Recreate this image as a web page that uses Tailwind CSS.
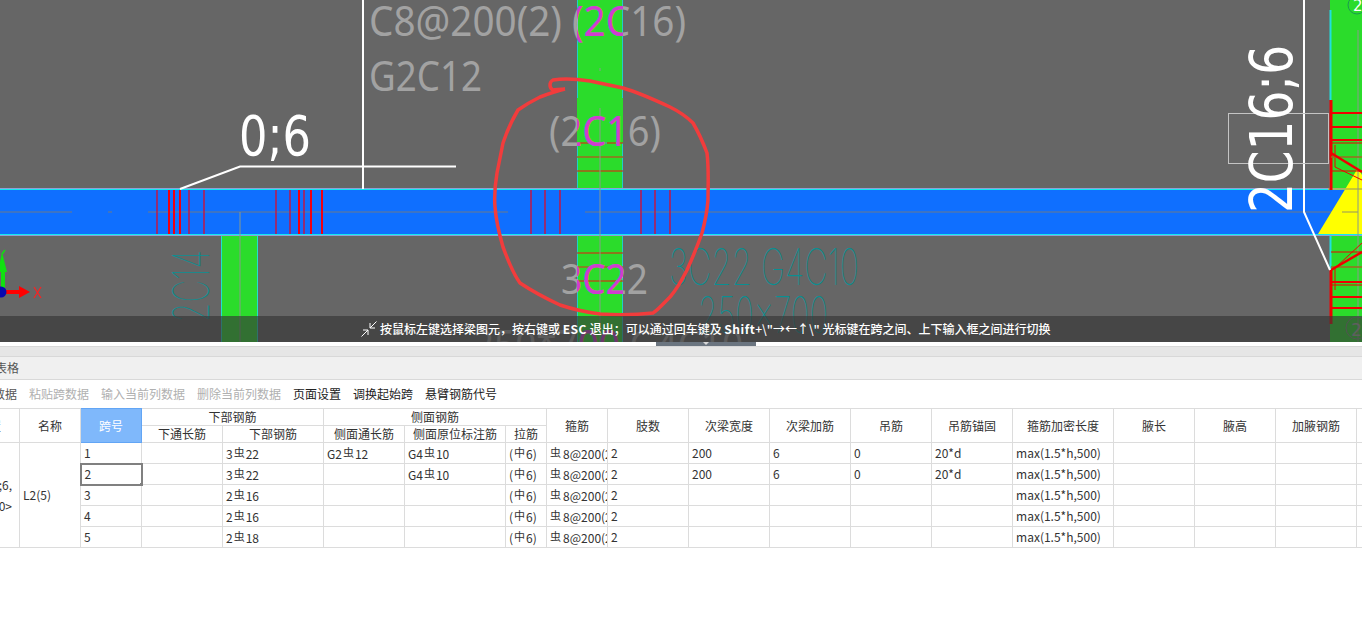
<!DOCTYPE html>
<html lang="en">
<head>
    <meta charset="UTF-8">
    <title>梁平法表格</title>
    <script src="https://cdn.jsdelivr.net/npm/@tailwindcss/browser@4"></script>
</head>
<body class="w-[1362px] h-[641px] overflow-hidden bg-white font-['Noto_Sans_CJK_SC','Noto_Sans',sans-serif] text-[12px] text-[#333]">

    <!-- CAD canvas -->
    <div class="relative h-[342px] overflow-hidden bg-[#666666]">
        <svg class="absolute inset-0" width="1362" height="342" viewBox="0 0 1362 342">
            <defs>
                <clipPath id="midCol"><rect x="577" y="0" width="46" height="342"/></clipPath>
            </defs>

            <!-- columns -->
            <rect x="577" y="0" width="46" height="342" fill="#2bdc2b"/>
            <path d="M577.5 0V98M622.5 0V98M577.5 143V189M622.5 143V189M577.5 235V342M622.5 235V342" stroke="#1fd0c8" stroke-width="1"/>
            <rect x="221" y="235" width="37" height="107" fill="#2bdc2b"/>
            <path d="M221.5 235V342M257.5 235V342" stroke="#20e0d0"/>
            <rect x="1330" y="0" width="32" height="342" fill="#2bdc2b"/>
            <path d="M1330.5 10V100M1330.5 160V189M1330.5 235V270" stroke="#20e0e0" stroke-width="2"/>

            <!-- beam -->
            <rect x="0" y="189" width="1362" height="46" fill="#0f6fff"/>
            <path d="M0 189.5H1362M0 234.5H1362" stroke="#12e8f0" stroke-width="1"/>
            <path d="M0 188.5H1362M0 235.5H1362" stroke="#8f9fd8" stroke-width="1"/>
            <path d="M0 212H72M108 212H112M148 212H508M585 212H1358" stroke="#4f77b0" stroke-width="1.5"/>

            <!-- yellow support -->
            <polygon points="1318,234 1358,168 1362,175 1362,234" fill="#ffff00"/>
            <path d="M1342 212H1358M1328 189H1362" stroke="#b8b840" stroke-width="1.5"/>

            <!-- stirrups -->
            <path d="M157 190V234M189 190V234M204 190V234M276 190V234M290 190V234M304 190V234M531 190V234M545 190V234M560 190V234M641 190V234M655 190V234M670 190V234" stroke="#c01848" stroke-width="1.5"/>
            <path d="M169 190V234M180 190V234M174 190V234M299 190V234M311 190V234M322 190V234" stroke="#f00010" stroke-width="2"/>

            <!-- column rebar ticks -->
            <path d="M577 143H623M577 171H623M577 253H623M577 281H623" stroke="#f01010" stroke-width="1"/>
            <path d="M577 157H623M577 267H623" stroke="#a06a20" stroke-width="1.5"/>
            <path d="M592 143H607" stroke="#20d8e8" stroke-width="1"/>

            <!-- center lines -->
            <path d="M600 108V342M600 68V71" stroke="#8a9a8a" stroke-width="1"/>
            <path d="M240 212V342" stroke="#8a9a8a" stroke-width="1"/>
            <path d="M1358 30V342" stroke="#8a9a8a" stroke-width="1"/>

            <!-- right side rebar -->
            <path d="M1331 100V190M1331 270V324" stroke="#f00000" stroke-width="3"/>
            <path d="M1331 113H1362M1331 127H1362M1331 140H1362M1331 282H1362M1331 297H1362M1331 308H1362" stroke="#f00000" stroke-width="2"/>
            <path d="M1331 143H1362M1331 171H1362M1331 252H1362M1331 285H1362M1335 145V167L1362 180M1335 290V268L1362 243" stroke="#f00000" stroke-width="1" fill="none"/>
            <path d="M1331 157H1362M1331 267H1362" stroke="#a06a20" stroke-width="1.5"/>
            <path d="M1331 153L1362 172M1331 270L1362 252" stroke="#f00000" stroke-width="2.5"/>

            <!-- grid bubbles -->
            <circle cx="1357" cy="5" r="9" fill="none" stroke="#1a9a50"/>
            <text x="1353" y="11" font-size="15" fill="#fff" class="font-['DejaVu_Sans',sans-serif]">2</text>
            <circle cx="1357" cy="328" r="11" fill="none" stroke="#888"/>
            <text x="1351" y="336" font-size="17" fill="#aaa" class="font-['DejaVu_Sans',sans-serif]">2</text>

            <!-- gray annotations -->
            <g fill="#a2a2a2" class="font-['Noto_Sans',sans-serif]" font-size="41">
                <text x="369" y="36" textLength="317" lengthAdjust="spacingAndGlyphs">C8@200(2) (2C16)</text>
                <text x="369" y="91" textLength="113" lengthAdjust="spacingAndGlyphs">G2C12</text>
                <text x="549" y="146" textLength="112" lengthAdjust="spacingAndGlyphs">(2C16)</text>
                <text x="561" y="294" textLength="87" lengthAdjust="spacingAndGlyphs">3C22</text>
                <text x="473" y="360" textLength="270" lengthAdjust="spacingAndGlyphs">250*700 G4C10</text>
            </g>
            <g fill="#d03cd0" clip-path="url(#midCol)" class="font-['Noto_Sans',sans-serif]" font-size="41">
                <text x="369" y="36" textLength="317" lengthAdjust="spacingAndGlyphs">C8@200(2) (2C16)</text>
                <text x="549" y="146" textLength="112" lengthAdjust="spacingAndGlyphs">(2C16)</text>
                <text x="561" y="294" textLength="87" lengthAdjust="spacingAndGlyphs">3C22</text>
                <text x="473" y="360" textLength="270" lengthAdjust="spacingAndGlyphs">250*700 G4C10</text>
            </g>

            <!-- teal annotations -->
            <g fill="#0a8f92" font-weight="100" class="font-['Inter',sans-serif]" font-size="50">
                <text x="669" y="285" textLength="190" lengthAdjust="spacingAndGlyphs">3C22 G4C10</text>
                <text x="698" y="333" textLength="130" lengthAdjust="spacingAndGlyphs">250x700</text>
                <text transform="translate(209 322) rotate(-90)" textLength="72" lengthAdjust="spacingAndGlyphs">2C14</text>
            </g>

            <!-- white leaders and labels -->
            <path d="M363 0V189M180 189L240 166.5H456" stroke="#fff" stroke-width="2" fill="none"/>
            <path d="M1304 0V212L1330 270" stroke="#fff" stroke-width="2" fill="none"/>
            <rect x="1228.5" y="113.5" width="100" height="50" fill="none" stroke="#c4c4c4" stroke-width="1"/>
            <g fill="#fff" class="font-['DejaVu_Sans',sans-serif]">
                <text x="239" y="155" font-size="56" textLength="72" lengthAdjust="spacingAndGlyphs">0;6</text>
                <text transform="translate(1292 213) rotate(-90)" font-size="58" textLength="168" lengthAdjust="spacingAndGlyphs">2C16;6</text>
            </g>

            <!-- axis -->
            <path d="M3 292V268" stroke="#10e010" stroke-width="4"/>
            <path d="M-2 272L2 252L7 272Z" fill="#10e010"/>
            <path d="M2 254L5 250" stroke="#10e010" stroke-width="1.5"/>
            <path d="M6 292H20" stroke="#ff0000" stroke-width="4"/>
            <path d="M19 286L30 292L19 298Z" fill="#ff0000"/>
            <circle cx="1" cy="292" r="5.5" fill="#0808b0"/>
            <path d="M34 287L41 298M41 287L34 298" stroke="#ff2020" stroke-width="1.2"/>

            <!-- hand drawn circle -->
            <path d="M565 89C560 89 556 90 553 90C549 88 549 82 553 80C565 78 577 79 590 81L623 88C640 93 655 100 670 107C682 113 688 118 693 123C700 135 704 145 707 153C709 170 708 185 708 200C707 213 705 222 702 233C697 247 692 259 687 270C682 280 676 290 670 297C663 304 658 310 653 313C635 315 617 315 600 314C585 312 572 309 560 305C545 298 532 291 520 283C512 272 508 260 503 247C499 233 496 220 495 207C494 195 495 185 497 173C499 163 501 153 503 143C507 131 512 120 518 110C525 105 532 101 540 97C548 94 556 91 565 89" fill="none" stroke="#f23c3c" stroke-width="3.5" stroke-linejoin="round"/>
        </svg>

        <!-- hint bar over the canvas -->
        <div class="absolute left-0 right-0 bottom-0 h-[26px] bg-[#363636]/65 flex items-center pl-[361px] gap-[3px] text-white font-medium text-[12px] whitespace-nowrap">
            <svg class="shrink-0" width="16" height="16" viewBox="0 0 16 16" fill="none" stroke="#fff" stroke-width="1">
                <path d="M0.5 15.5L7 9M2 9H7V14"/>
                <path d="M15.5 0.5L9 7M9 2V7H14"/>
            </svg>
            <span>按鼠标左键选择梁图元，按右键或 <b class="tracking-[0.5px]">ESC</b> 退出；可以通过回车键及 <b class="tracking-[0.5px]">Shift</b>+\"→←↑\" 光标键在跨之间、上下输入框之间进行切换</span>
        </div>
    </div>

    <!-- splitter -->
    <div class="h-[4px] flex justify-start pl-[656px]">
        <div class="w-[100px] h-[4px] bg-[#6b7580] flex justify-center">
            <div class="w-0 h-0 border-x-[3px] border-x-transparent border-t-[3px] border-t-[#d8d8d8]"></div>
        </div>
    </div>
    <div class="h-[11px] bg-[#e6e6e6] border-y border-[#d8d8d8]"></div>

    <!-- panel title -->
    <div class="h-[23px] bg-[#f0f0f0] border-b border-[#d9d9d9] flex items-center overflow-hidden">
        <span class="ml-[-41px] text-[#555] whitespace-nowrap">梁平法表格</span>
    </div>

    <!-- toolbar -->
    <div class="h-[28px] flex items-center gap-3 ml-[-43px] whitespace-nowrap">
        <span class="text-[#555]">复制跨数据</span>
        <span class="text-[#b0b0b0]">粘贴跨数据</span>
        <span class="text-[#b0b0b0]">输入当前列数据</span>
        <span class="text-[#b0b0b0]">删除当前列数据</span>
        <span class="text-[#222]">页面设置</span>
        <span class="text-[#222]">调换起始跨</span>
        <span class="text-[#222]">悬臂钢筋代号</span>
    </div>

    <!-- rebar table -->
    <div class="overflow-hidden">
        <table class="ml-[-61px] w-[1483px] table-fixed border-collapse [&_td]:border [&_td]:border-[#dcdcdc] [&_td]:px-[3px] [&_td]:whitespace-nowrap [&_td]:overflow-hidden [&_th]:border [&_th]:border-[#dcdcdc] [&_th]:font-normal [&_th]:leading-[14px] [&_th]:text-[#333] [&_tbody_tr]:h-[21px]">
            <colgroup>
                <col class="w-[80px]"><col class="w-[61px]"><col class="w-[61px]"><col class="w-[81px]"><col class="w-[101px]">
                <col class="w-[81px]"><col class="w-[101px]"><col class="w-[41px]"><col class="w-[61px]"><col class="w-[81px]">
                <col class="w-[81px]"><col class="w-[81px]"><col class="w-[81px]"><col class="w-[81px]"><col class="w-[101px]">
                <col class="w-[81px]"><col class="w-[81px]"><col class="w-[81px]"><col class="w-[66px]">
            </colgroup>
            <thead>
                <tr class="h-[17px]">
                    <th rowspan="2" class="text-right pr-[18px]">位置</th>
                    <th rowspan="2">名称</th>
                    <th rowspan="2" class="bg-[#7fb8fb] !border-[#62a5f5] !text-white">跨号</th>
                    <th colspan="2">下部钢筋</th>
                    <th colspan="3">侧面钢筋</th>
                    <th rowspan="2">箍筋</th>
                    <th rowspan="2">肢数</th>
                    <th rowspan="2">次梁宽度</th>
                    <th rowspan="2">次梁加筋</th>
                    <th rowspan="2">吊筋</th>
                    <th rowspan="2">吊筋锚固</th>
                    <th rowspan="2">箍筋加密长度</th>
                    <th rowspan="2">腋长</th>
                    <th rowspan="2">腋高</th>
                    <th rowspan="2">加腋钢筋</th>
                    <th rowspan="2"></th>
                </tr>
                <tr class="h-[17px]">
                    <th>下通长筋</th>
                    <th>下部钢筋</th>
                    <th>侧面通长筋</th>
                    <th>侧面原位标注筋</th>
                    <th>拉筋</th>
                </tr>
            </thead>
            <tbody>
                <tr>
                    <td rowspan="5" class="text-right !pr-[7px] leading-[21px]">&lt;2;A-2C16;6,<br>250x700&gt;</td>
                    <td rowspan="5">L2(5)</td>
                    <td>1</td><td></td>
                    <td>3<span class="text-[11px] mx-px align-[2px]">虫</span>22</td>
                    <td>G2<span class="text-[11px] mx-px align-[2px]">虫</span>12</td>
                    <td>G4<span class="text-[11px] mx-px align-[2px]">虫</span>10</td>
                    <td>(<span class="text-[11px] mx-px align-[2px]">中</span>6)</td>
                    <td><span class="text-[11px] mr-[2px] align-[2px]">虫</span>8@200(2)</td>
                    <td>2</td><td>200</td><td>6</td><td>0</td><td>20*d</td><td>max(1.5*h,500)</td><td></td><td></td><td></td><td></td>
                </tr>
                <tr>
                    <td class="relative !border-2 !border-[#808080]">2<div class="absolute right-[-2px] bottom-[-2px] w-[3px] h-[3px] bg-[#808080]"></div></td><td></td>
                    <td>3<span class="text-[11px] mx-px align-[2px]">虫</span>22</td>
                    <td></td>
                    <td>G4<span class="text-[11px] mx-px align-[2px]">虫</span>10</td>
                    <td>(<span class="text-[11px] mx-px align-[2px]">中</span>6)</td>
                    <td><span class="text-[11px] mr-[2px] align-[2px]">虫</span>8@200(2)</td>
                    <td>2</td><td>200</td><td>6</td><td>0</td><td>20*d</td><td>max(1.5*h,500)</td><td></td><td></td><td></td><td></td>
                </tr>
                <tr>
                    <td>3</td><td></td>
                    <td>2<span class="text-[11px] mx-px align-[2px]">虫</span>16</td>
                    <td></td><td></td>
                    <td>(<span class="text-[11px] mx-px align-[2px]">中</span>6)</td>
                    <td><span class="text-[11px] mr-[2px] align-[2px]">虫</span>8@200(2)</td>
                    <td>2</td><td></td><td></td><td></td><td></td><td>max(1.5*h,500)</td><td></td><td></td><td></td><td></td>
                </tr>
                <tr>
                    <td>4</td><td></td>
                    <td>2<span class="text-[11px] mx-px align-[2px]">虫</span>16</td>
                    <td></td><td></td>
                    <td>(<span class="text-[11px] mx-px align-[2px]">中</span>6)</td>
                    <td><span class="text-[11px] mr-[2px] align-[2px]">虫</span>8@200(2)</td>
                    <td>2</td><td></td><td></td><td></td><td></td><td>max(1.5*h,500)</td><td></td><td></td><td></td><td></td>
                </tr>
                <tr>
                    <td>5</td><td></td>
                    <td>2<span class="text-[11px] mx-px align-[2px]">虫</span>18</td>
                    <td></td><td></td>
                    <td>(<span class="text-[11px] mx-px align-[2px]">中</span>6)</td>
                    <td><span class="text-[11px] mr-[2px] align-[2px]">虫</span>8@200(2)</td>
                    <td>2</td><td></td><td></td><td></td><td></td><td>max(1.5*h,500)</td><td></td><td></td><td></td><td></td>
                </tr>
            </tbody>
        </table>
    </div>
</body>
</html>
